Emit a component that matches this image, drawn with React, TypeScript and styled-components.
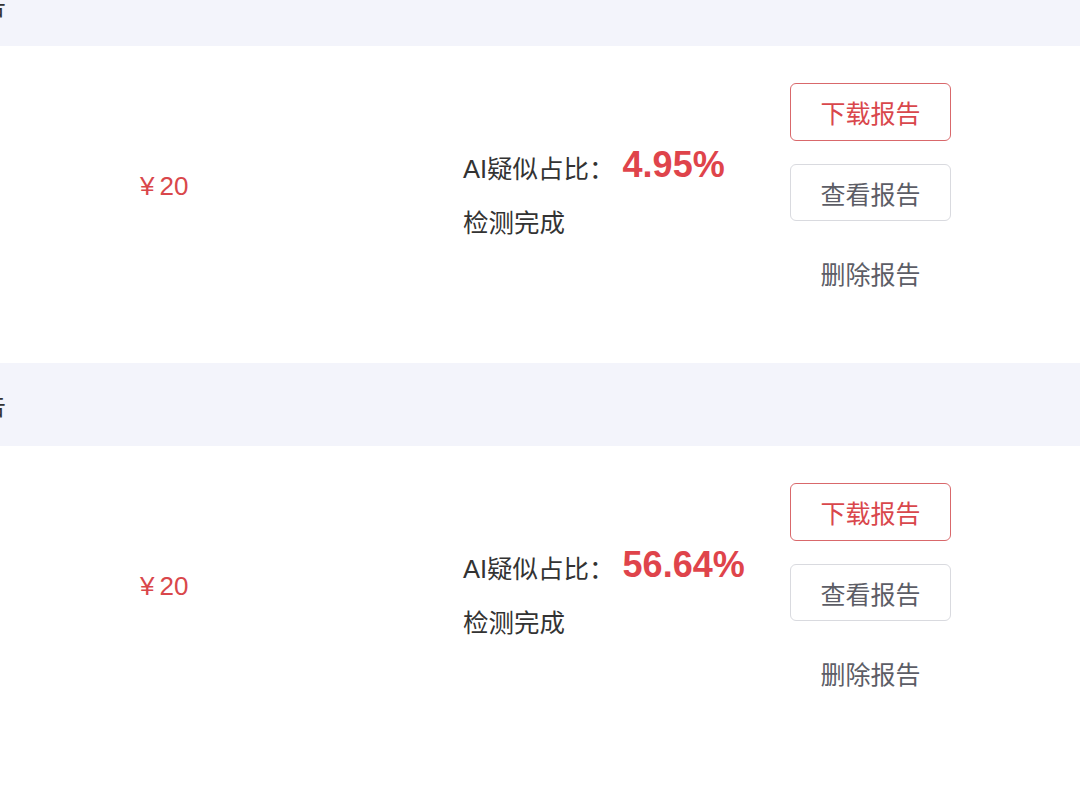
import React from "react";
import styled, { createGlobalStyle } from "styled-components";

const Global = createGlobalStyle`
  html, body { margin: 0; padding: 0; background: #ffffff; overflow: hidden; }
  body { font-family: "Liberation Sans", "Noto Sans CJK SC", sans-serif; }
`;

const List = styled.div`
  margin-top: -37px;
  width: 1080px;
  overflow: hidden;
`;

const Header = styled.div`
  height: 83px;
  background: #f3f4fb;
  display: flex;
  align-items: center;
`;

const HeaderTitle = styled.span`
  margin-left: -42px;
  font-size: 24px;
  color: #333333;
  white-space: nowrap;
`;

const Body = styled.div`
  height: 317px;
  background: #ffffff;
  display: grid;
  grid-template-columns: 140px 323px 327px 161px;
  align-items: start;
  padding-top: 37px;
  box-sizing: border-box;
`;

const Price = styled.div`
  grid-column: 2;
  margin-top: 88px;
  font-size: 26px;
  line-height: 30px;
  color: #d9474b;
`;

const Yen = styled.span`
  margin-right: 5px;
`;

const Info = styled.div`
  grid-column: 3;
  margin-top: 63px;
  display: flex;
  flex-direction: column;
  gap: 14px;
`;

const InfoLine = styled.div`
  display: flex;
  align-items: center;
  height: 40px;
  font-size: 25.5px;
  color: #333333;
`;

const Percent = styled.span`
  margin-left: 8px;
  font-size: 36px;
  font-weight: 700;
  color: #df444b;
  margin-top: -3px;
`;

const Actions = styled.div`
  grid-column: 4;
  display: flex;
  flex-direction: column;
  gap: 23px;
`;

const ActionButton = styled.button<{ $variant: "primary" | "outline" | "text" }>`
  height: ${(p) => (p.$variant === "outline" ? "57px" : "58px")};
  width: 161px;
  box-sizing: border-box;
  border-radius: 6px;
  font-family: "Liberation Sans", "Noto Sans CJK SC", sans-serif;
  font-size: 25px;
  cursor: pointer;
  padding: 0;
  background: #ffffff;
  border: 1px solid
    ${(p) =>
      p.$variant === "primary"
        ? "#d9686b"
        : p.$variant === "outline"
        ? "#d9dadf"
        : "transparent"};
  color: ${(p) => (p.$variant === "primary" ? "#d9474c" : "#5c5d66")};
`;

type Row = { title: string; price: string; percent: string; status: string };

const rows: Row[] = [
  { title: "报告", price: "20", percent: "4.95%", status: "检测完成" },
  { title: "报告", price: "20", percent: "56.64%", status: "检测完成" },
];

export default function App() {
  return (
    <>
      <Global />
      <List>
        {rows.map((r, i) => (
          <React.Fragment key={i}>
            <Header>
              <HeaderTitle>{r.title}</HeaderTitle>
            </Header>
            <Body>
              <Price>
                <Yen>¥</Yen>
                {r.price}
              </Price>
              <Info>
                <InfoLine>
                  AI疑似占比：<Percent>{r.percent}</Percent>
                </InfoLine>
                <InfoLine>{r.status}</InfoLine>
              </Info>
              <Actions>
                <ActionButton $variant="primary">下载报告</ActionButton>
                <ActionButton $variant="outline">查看报告</ActionButton>
                <ActionButton $variant="text">删除报告</ActionButton>
              </Actions>
            </Body>
          </React.Fragment>
        ))}
      </List>
    </>
  );
}
